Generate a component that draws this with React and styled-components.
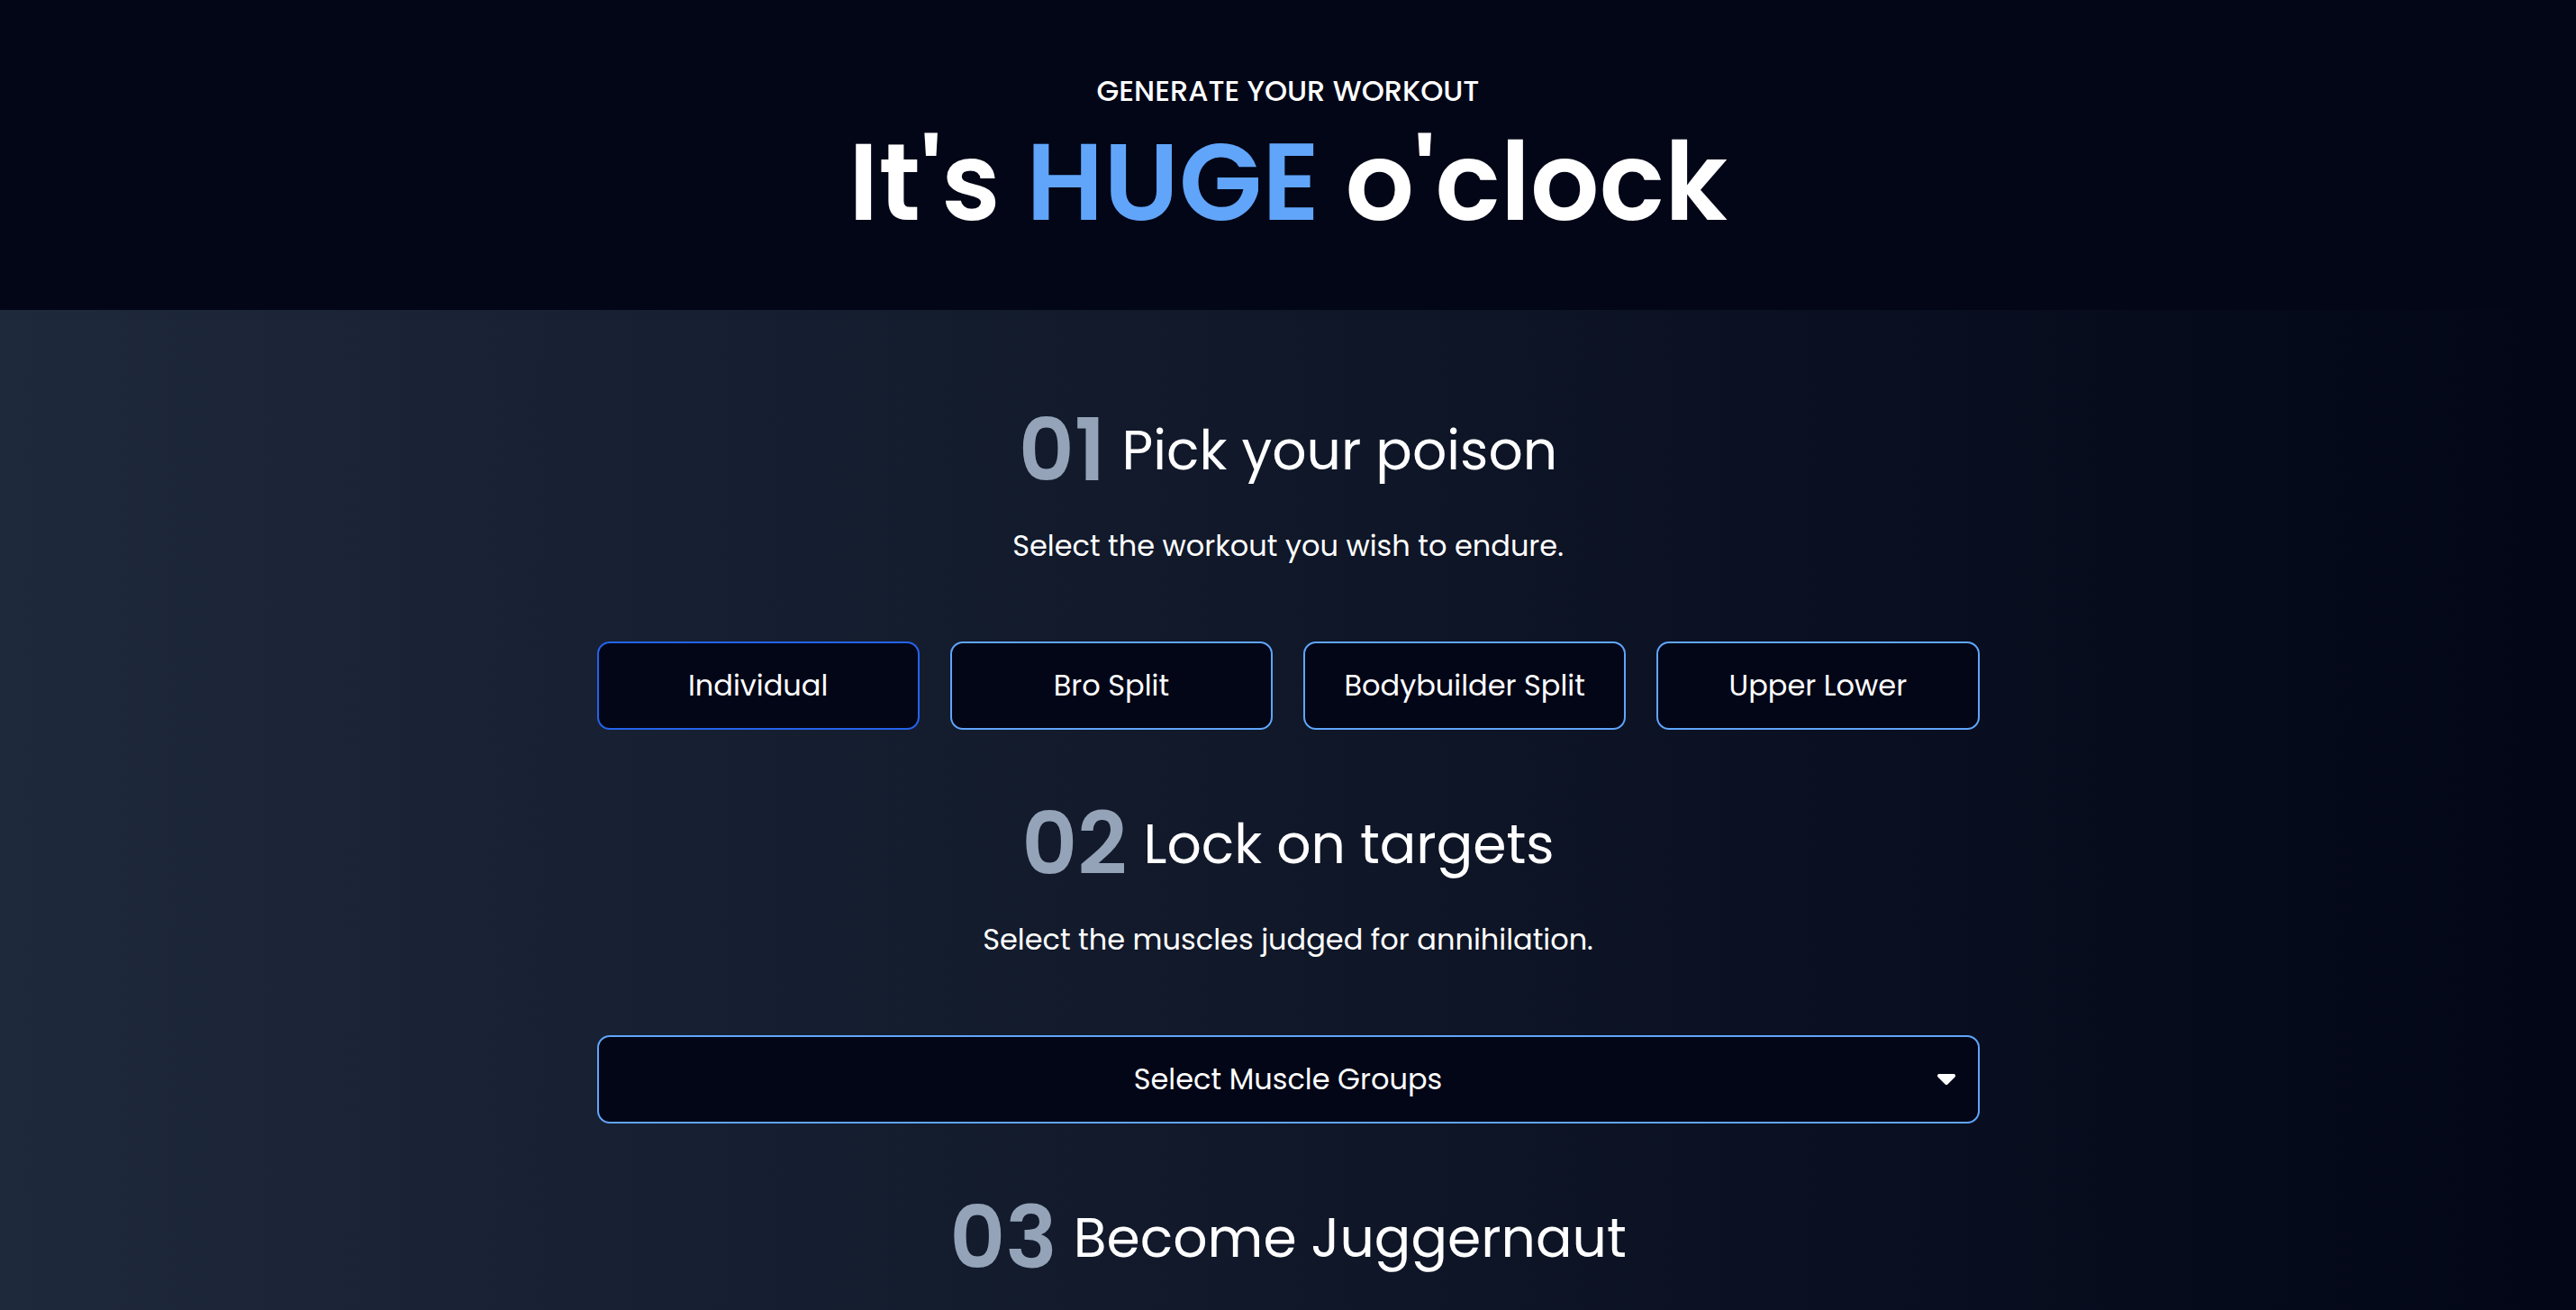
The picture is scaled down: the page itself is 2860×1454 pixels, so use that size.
import React from "react";
import styled, { createGlobalStyle } from "styled-components";

const GlobalStyle = createGlobalStyle`
  html, body {
    margin: 0;
    padding: 0;
    background: #020617;
    font-family: "Poppins", Inter, "Noto Sans", sans-serif;
    color: #ffffff;
  }
  * { box-sizing: border-box; }
`;

const Header = styled.header`
  height: 344px;
  background: #020617;
  display: flex;
  flex-direction: column;
  align-items: center;
  padding-top: 85px;
`;

const Eyebrow = styled.p`
  margin: 0;
  font-size: 32px;
  line-height: 1;
  font-weight: 500;
  text-transform: uppercase;
`;

const Title = styled.h1`
  margin: 25px 0 0;
  font-size: 120px;
  line-height: 1;
  font-weight: 600;
`;

const Accent = styled.span`
  color: #60a5fa;
`;

const Main = styled.main`
  background: linear-gradient(to right, #1e293b, #020617);
  padding: 108px 0 200px;
  display: flex;
  flex-direction: column;
  align-items: center;
`;

const Section = styled.section`
  width: 1535px;
  display: flex;
  flex-direction: column;
  align-items: center;
  margin-bottom: 79px;
`;

const HeadingRow = styled.div`
  display: flex;
  align-items: center;
  gap: 18px;
`;

const Number = styled.span`
  font-size: 96px;
  line-height: 1;
  font-weight: 600;
  color: #94a3b8;
`;

const Heading = styled.h2`
  margin: 0;
  font-size: 60px;
  line-height: 1;
  font-weight: 400;
`;

const Subtitle = styled.p`
  margin: 42px 0 90px;
  font-size: 32px;
  line-height: 1;
  font-weight: 400;
`;

const ButtonGrid = styled.div`
  width: 100%;
  display: grid;
  grid-template-columns: repeat(4, 1fr);
  gap: 34px;
`;

const OptionButton = styled.button`
  height: 98px;
  border-radius: 14px;
  border: 2px solid ${(p) => (p.$active ? "#2563eb" : "#60a5fa")};
  background: #020617;
  color: #ffffff;
  font-family: inherit;
  font-size: 32px;
  font-weight: 400;
  cursor: pointer;
`;

const Dropdown = styled.button`
  position: relative;
  width: 100%;
  height: 98px;
  border-radius: 14px;
  border: 2px solid #60a5fa;
  background: #020617;
  color: #ffffff;
  font-family: inherit;
  font-size: 32px;
  display: flex;
  align-items: center;
  justify-content: center;
  cursor: pointer;
`;

const Caret = styled.svg`
  position: absolute;
  right: 25px;
  top: 50%;
  transform: translateY(-50%);
  width: 20px;
  height: 12px;
  fill: #ffffff;
`;

const sections = [
  { n: "01", title: "Pick your poison", sub: "Select the workout you wish to endure." },
  { n: "02", title: "Lock on targets", sub: "Select the muscles judged for annihilation." },
  { n: "03", title: "Become Juggernaut", sub: "Select your ultimate objective." },
];

const workouts = ["Individual", "Bro Split", "Bodybuilder Split", "Upper Lower"];

const SectionHead = ({ n, title, sub }) => (
  <>
    <HeadingRow>
      <Number>{n}</Number>
      <Heading>{title}</Heading>
    </HeadingRow>
    <Subtitle>{sub}</Subtitle>
  </>
);

export default function App() {
  return (
    <>
      <GlobalStyle />
      <Header>
        <Eyebrow>Generate your workout</Eyebrow>
        <Title>
          It's <Accent>HUGE</Accent> o'clock
        </Title>
      </Header>
      <Main>
        <Section>
          <SectionHead {...sections[0]} />
          <ButtonGrid>
            {workouts.map((w, i) => (
              <OptionButton key={w} $active={i === 0}>
                {w}
              </OptionButton>
            ))}
          </ButtonGrid>
        </Section>
        <Section>
          <SectionHead {...sections[1]} />
          <Dropdown>
            Select Muscle Groups
            <Caret viewBox="0 192 320 192" preserveAspectRatio="none">
              <path d="M137.4 374.6c12.5 12.5 32.8 12.5 45.3 0l128-128c9.2-9.2 11.9-22.9 6.9-34.9s-16.6-19.8-29.6-19.8L32 192c-12.9 0-24.6 7.8-29.6 19.8s-2.2 25.7 6.9 34.9l128 128z" />
            </Caret>
          </Dropdown>
        </Section>
        <Section>
          <SectionHead {...sections[2]} />
        </Section>
      </Main>
    </>
  );
}
